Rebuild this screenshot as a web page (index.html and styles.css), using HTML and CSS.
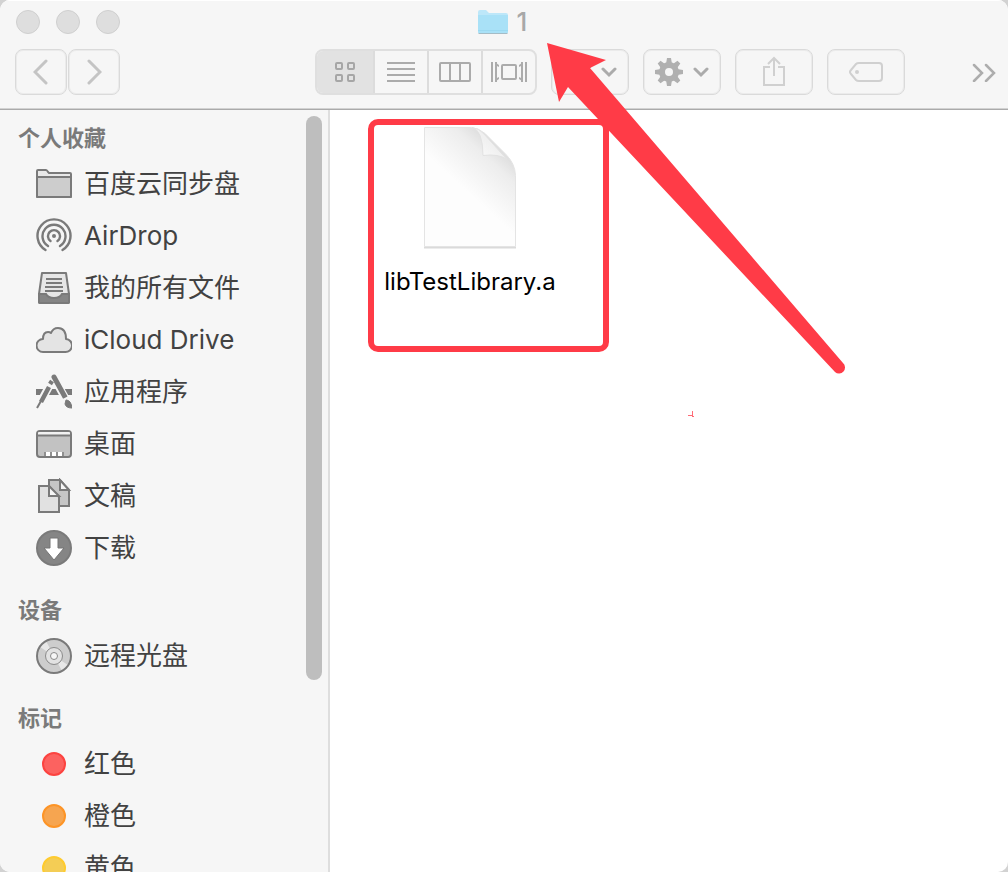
FILE: index.html
```html
<!DOCTYPE html>
<html lang="zh-CN">
<head>
    <meta charset="UTF-8">
    <meta name="viewport" content="width=device-width, initial-scale=1.0">
    <title>1</title>
    <link rel="stylesheet" href="styles.css">
</head>
<body>
    <div class="window">
        <header class="titlebar">
            <div class="title-row">
                <div class="lights">
                    <button class="light" aria-label="关闭"></button>
                    <button class="light" aria-label="最小化"></button>
                    <button class="light" aria-label="缩放"></button>
                </div>
                <h1 class="title">
                    <svg width="32" height="26" viewBox="0 0 32 26">
                        <path d="M1 3q0-2 2-2h6l3 3h17q2 0 2 2v17q0 1-1 1H2q-1 0-1-1z" fill="#bde7f9"/>
                        <path d="M1 6h30v17q0 1-1 1H2q-1 0-1-1z" fill="#a9e1f7"/>
                        <path d="M1 21.500h30" stroke="#9cdaf1"/>
                        <path d="M1.500 24.500h29" stroke="#a5bcc6"/>
                    </svg>
                    <span>1</span>
                </h1>
            </div>
            <div class="toolbar">
                <div class="nav">
                    <button class="tool nav-button" aria-label="后退">
                        <svg width="16" height="26" viewBox="0 0 16 26"><path d="M13 2L2 13l11 11" fill="none" stroke="#c4c4c4" stroke-width="3" stroke-linecap="round"/></svg>
                    </button>
                    <button class="tool nav-button" aria-label="前进">
                        <svg width="16" height="26" viewBox="0 0 16 26"><path d="M3 2l11 11L3 24" fill="none" stroke="#c4c4c4" stroke-width="3" stroke-linecap="round"/></svg>
                    </button>
                </div>
                <div class="views">
                    <button class="view active" aria-label="图标">
                        <svg width="22" height="22" viewBox="0 0 22 22" fill="none" stroke="#a6a6a6" stroke-width="2"><rect x="2" y="2" width="6" height="6" rx="1"/><rect x="14" y="2" width="6" height="6" rx="1"/><rect x="2" y="14" width="6" height="6" rx="1"/><rect x="14" y="14" width="6" height="6" rx="1"/></svg>
                    </button>
                    <button class="view" aria-label="列表">
                        <svg width="28" height="20" viewBox="0 0 28 20"><path d="M0 1h28M0 7h28M0 13h28M0 19h28" stroke="#ababab" stroke-width="2"/></svg>
                    </button>
                    <button class="view" aria-label="分栏">
                        <svg width="32" height="20" viewBox="0 0 32 20" fill="none" stroke="#ababab" stroke-width="2"><rect x="1" y="1" width="30" height="18" rx="1"/><path d="M11 1v18M21 1v18"/></svg>
                    </button>
                    <button class="view" aria-label="Cover Flow">
                        <svg width="36" height="20" viewBox="0 0 36 20" fill="none" stroke="#ababab" stroke-width="2"><rect x="11" y="3" width="14" height="14" rx="1"/><path d="M1 0v20M5 0v20M31 0v20M35 0v20"/><path d="M5 1l3 2v2L6 4zM5 19l3-2v-2l-2 1zM31 1l-3 2v2l2-1zM31 19l-3-2v-2l2 1z" fill="#ababab" stroke="none"/></svg>
                    </button>
                </div>
                <button class="tool" aria-label="排列">
                    <svg width="28" height="28" viewBox="0 0 28 28" fill="none" stroke="#ababab" stroke-width="2"><path d="M3 4h6v5H3zM12 4h6v5h-6zM21 4h6v5h-6zM3 18h6v5H3zM12 18h6v5h-6z"/></svg>
                    <svg width="16" height="12" viewBox="0 0 16 12"><path d="M2 3l6 6 6-6" fill="none" stroke="#ababab" stroke-width="3" stroke-linecap="round"/></svg>
                </button>
                <button class="tool" aria-label="操作">
                    <svg width="28" height="28" viewBox="-14 -14 28 28" fill="#b0b0b0">
                        <path d="M-2-14h4l1 6h-6zM-2 14h4l1-6h-6zM-14-2v4l6 1v-6zM14-2v4l-6 1v-6z"/>
                        <path d="M-2-14h4l1 6h-6zM-2 14h4l1-6h-6zM-14-2v4l6 1v-6zM14-2v4l-6 1v-6z" transform="rotate(45)"/>
                        <circle r="7" fill="none" stroke="#b0b0b0" stroke-width="6"/>
                    </svg>
                    <svg width="16" height="12" viewBox="0 0 16 12"><path d="M2 3l6 6 6-6" fill="none" stroke="#ababab" stroke-width="3" stroke-linecap="round"/></svg>
                </button>
                <button class="tool" aria-label="共享">
                    <svg width="24" height="32" viewBox="0 0 24 32" fill="none" stroke="#d0d0d0" stroke-width="2"><path d="M8 11H2v18h20V11h-6M12 20V2M6 8l6-6 6 6"/></svg>
                </button>
                <button class="tool" aria-label="标记">
                    <svg width="34" height="20" viewBox="0 0 34 20"><path d="M10 1h20q3 0 3 3v12q0 3-3 3H10q-2 0-3-1l-5-6q-2-2 0-4l5-6q1-1 3-1z" fill="none" stroke="#d0d0d0" stroke-width="2"/><circle cx="8" cy="10" r="2" fill="#d0d0d0"/></svg>
                </button>
                <button class="more" aria-label="更多">
                    <svg width="24" height="20" viewBox="0 0 24 20"><path d="M2 3l8 8-8 8M14 3l8 8-8 8" fill="none" stroke="#adadad" stroke-width="2.500" stroke-linecap="round"/></svg>
                </button>
            </div>
        </header>

        <div class="content">
            <nav class="sidebar">
                <h2 class="section-title">个人收藏</h2>
                <ul class="places">
                    <li><a href="#" class="place">
                        <svg class="icon" viewBox="0 0 36 36" stroke="#7a7a7a" stroke-width="2"><path d="M1 30V5q0-1 1-1h8q1 0 2 2l1 1h21q1 0 1 1v22q0 1-1 1H2q-1 0-1-1z" fill="#e8e8e8"/><path d="M1 11h34v20H1z" fill="#cdcdcd" stroke-linejoin="round"/></svg>
                        百度云同步盘</a></li>
                    <li><a href="#" class="place">
                        <svg class="icon" viewBox="0 0 36 36" fill="none" stroke="#7a7a7a" stroke-width="2.400" stroke-linecap="round"><circle cx="18" cy="18" r="2" fill="#7a7a7a" stroke="none"/><path d="M14.500 23A6 6 0 1 1 21.500 23M12 28A11.500 11.500 0 1 1 24 28M9.500 32A16.500 16.500 0 1 1 26.500 32"/></svg>
                        AirDrop</a></li>
                    <li><a href="#" class="place">
                        <svg class="icon" viewBox="0 0 36 36" stroke="#7a7a7a" stroke-width="2"><path d="M6 3h24l3 21v8q0 1-1 1H4q-1 0-1-1v-8z" fill="#e6e6e6" stroke-linejoin="round"/><path d="M3 24h7q2 4 8 4t8-4h7v8q0 1-1 1H4q-1 0-1-1z" fill="#858585"/><path d="M10 9h16M10 13h16M9 17h18M9 21h18"/></svg>
                        我的所有文件</a></li>
                    <li><a href="#" class="place">
                        <svg class="icon" viewBox="0 0 36 36"><path d="M7 30a6.500 6.500 0 0 1 0-13Q7 10 12 10q2 0 3 1 2-5 7-5 8 0 8 11a6.500 6.500 0 0 1-1 13z" fill="#e4e4e4" stroke="#7a7a7a" stroke-width="2" stroke-linejoin="round"/></svg>
                        iCloud Drive</a></li>
                    <li><a href="#" class="place">
                        <svg class="icon" viewBox="0 0 36 36" fill="none" stroke="#7a7a7a"><path d="M0 18h36" stroke-width="6"/><path d="M17 5L3 31M18 4l14 25" stroke="#f6f6f6" stroke-width="8"/><path d="M16 7l-2 3M13 13L5 28" stroke-width="4.500"/><path d="M5 27l-4 7" stroke-width="2"/><path d="M18 3l11 20" stroke-width="5" stroke-linecap="round"/><path d="M27 26l6-3" stroke="#f6f6f6" stroke-width="2"/><path d="M30 26q5 0 6 8-6 0-7-4z" fill="#7a7a7a"/></svg>
                        应用程序</a></li>
                    <li><a href="#" class="place">
                        <svg class="icon" viewBox="0 0 36 36"><rect x="1" y="5" width="34" height="26" rx="3" fill="#c2c2c2" stroke="#7a7a7a" stroke-width="2"/><path d="M2 7q0-1 1-1h30q1 0 1 1v2H2z" fill="#f2f2f2"/><path d="M2 9.500h32" stroke="#7a7a7a" stroke-width="2"/><path d="M8 26h20v4H8z" fill="#8f8f8f"/><path d="M10 26h4v4h-4zM16 26h4v4h-4zM22 26h4v4h-4z" fill="#fff"/></svg>
                        桌面</a></li>
                    <li><a href="#" class="place">
                        <svg class="icon" viewBox="0 0 36 36" stroke="#7a7a7a" stroke-width="2"><path d="M13 2h11l9 10v16H13z" fill="#c6c6c6"/><path d="M24 2v10h9z" fill="#f6f6f6"/><path d="M3 8h10l10 11v15H3z" fill="#e1e1e1"/><path d="M13 8v10h10z" fill="#f6f6f6"/></svg>
                        文稿</a></li>
                    <li><a href="#" class="place">
                        <svg class="icon" viewBox="0 0 36 36"><circle cx="18" cy="18" r="17" fill="#858585" stroke="#7a7a7a" stroke-width="2"/><path d="M14 8h8v10h6L18 30 8 18h6z" fill="#fff" stroke="#747474"/></svg>
                        下载</a></li>
                </ul>
                <h2 class="section-title">设备</h2>
                <ul class="places">
                    <li><a href="#" class="place">
                        <svg class="icon" viewBox="0 0 36 36"><circle cx="18" cy="18" r="17" fill="#cdcdcd"/><path d="M18 18L4 9l6-6zM18 18l14 9-6 6z" fill="#e8e8e8"/><circle cx="18" cy="18" r="17" fill="none" stroke="#7a7a7a" stroke-width="2"/><circle cx="18" cy="18" r="8.500" fill="#e2e2e2" stroke="#8a8a8a"/><circle cx="18" cy="18" r="3.500" fill="#f6f6f6" stroke="#8a8a8a"/></svg>
                        远程光盘</a></li>
                </ul>
                <h2 class="section-title">标记</h2>
                <ul class="places">
                    <li><a href="#" class="place"><span class="icon"><span class="tag red"></span></span>红色</a></li>
                    <li><a href="#" class="place"><span class="icon"><span class="tag orange"></span></span>橙色</a></li>
                    <li><a href="#" class="place"><span class="icon"><span class="tag yellow"></span></span>黄色</a></li>
                </ul>
                <div class="scroll-thumb"></div>
            </nav>

            <main class="files">
                <div class="highlight">
                    <button class="file">
                        <svg width="100" height="128" viewBox="0 0 100 128">
                            <defs>
                                <linearGradient id="paper" gradientUnits="userSpaceOnUse" x1="82" y1="18" x2="42" y2="62">
                                    <stop offset="0" stop-color="#d8d8d8"/>
                                    <stop offset="0.350" stop-color="#ededed"/>
                                    <stop offset="1" stop-color="#fdfdfd"/>
                                </linearGradient>
                                <linearGradient id="curl" x1="0" y1="1" x2="0.500" y2="0.500">
                                    <stop offset="0" stop-color="#fff"/>
                                    <stop offset="1" stop-color="#f0f0f0"/>
                                </linearGradient>
                            </defs>
                            <path d="M4 122.500h92" stroke="#dadada" stroke-width="2"/>
                            <path d="M4.500 2.500H50q8 0 15 6l21 21q9 9 9.500 21v71h-91z" fill="url(#paper)" stroke="#e4e4e4"/>
                            <path d="M52 2.500q11 3 11 28 16-2 24 4L64 9q-5-6-12-6.500z" fill="url(#curl)" stroke="#e2e2e2"/>
                        </svg>
                        <span>libTestLibrary.a</span>
                    </button>
                </div>
            </main>
        </div>

        <!-- hand drawn marks on top of the window -->
        <svg class="arrow" width="300" height="332" viewBox="0 0 300 332"><path d="M0 0l59 17-16 8 253 295a6 6 0 0 1-8 9L21 44l-9 15z" fill="#ff3b47"/></svg>
        <svg class="speck" width="8" height="8" viewBox="0 0 8 8"><path d="M0 5.500h4M4.500 1v5M4 6.500h2" fill="none" stroke="#ff6b76"/></svg>
    </div>
</body>
</html>
```
FILE: styles.css
```css
* {
    box-sizing: border-box;
}
body {
    margin: 0;
    background-color: #d2d2d2;
    color: #424242;
    font-family: Inter, "Noto Sans CJK SC", sans-serif;
}
button {
    font: inherit;
    padding: 0;
    border: none;
    background: none;
}
h1, h2, ul {
    margin: 0;
    padding: 0;
}
svg {
    display: block;
    flex: none;
}
.window {
    position: relative;
    display: flex;
    flex-direction: column;
    height: 100vh;
    overflow: hidden;
    border-radius: 10px;
    background-color: #fff;
}

/* title bar */
.titlebar {
    flex: none;
    height: 110px;
    border-top: 1px solid #fff;
    border-bottom: 1px solid #aaa;
    background-color: #f6f6f6;
    box-shadow: inset 0 -1px #d2d2d2;
}
.title-row {
    display: grid;
    grid-template-columns: 1fr auto 1fr;
    align-items: center;
    height: 42px;
    padding: 0 20px 0 16px;
}
.lights {
    display: flex;
    gap: 16px;
}
.light {
    width: 24px;
    height: 24px;
    border: 1px solid #cfcfcf;
    border-radius: 50%;
    background-color: #dedede;
}
.title {
    display: flex;
    align-items: center;
    gap: 8px;
    color: #a8a8a8;
    font-size: 26px;
    font-weight: 500;
    line-height: 32px;
}
.toolbar {
    display: flex;
    align-items: center;
    gap: 14px;
    margin-top: 6px;
    padding: 0 12px 0 15px;
}
.nav {
    display: flex;
    gap: 1px;
    margin-right: 181px;
}
.tool {
    display: flex;
    align-items: center;
    justify-content: center;
    gap: 10px;
    width: 78px;
    height: 46px;
    border: 1px solid #dadada;
    border-radius: 8px;
    box-shadow: inset 0 0 0 1px #ebebeb;
}
.nav-button {
    width: 52px;
}
.views {
    display: flex;
    height: 46px;
    border: 2px solid #dfdfdf;
    border-radius: 8px;
    overflow: hidden;
}
.view {
    display: flex;
    align-items: center;
    justify-content: center;
    width: 54px;
    border-left: 2px solid #dcdcdc;
}
.view.active {
    width: 56px;
    border-left: none;
    background-color: #e2e2e2;
}
.more {
    margin-left: auto;
}

/* sidebar */
.content {
    display: flex;
    flex: 1;
    min-height: 0;
}
.sidebar {
    position: relative;
    flex: none;
    width: 330px;
    overflow: hidden;
    border-right: 2px solid #dedede;
    background-color: #f6f6f6;
}
.section-title {
    margin-top: 16px;
    padding-left: 18px;
    color: #7a7a7a;
    font-size: 22px;
    font-weight: 700;
    line-height: 40px;
}
.section-title:first-child {
    margin-top: 8px;
}
.places {
    list-style: none;
}
.place {
    display: flex;
    align-items: center;
    gap: 12px;
    height: 52px;
    padding-left: 36px;
    color: inherit;
    font-size: 26px;
    line-height: 32px;
    text-decoration: none;
}
.icon {
    display: flex;
    align-items: center;
    justify-content: center;
    width: 36px;
    height: 36px;
}
.tag {
    width: 24px;
    height: 24px;
    border: 2px solid;
    border-radius: 50%;
}
.red {
    border-color: #fc4340;
    background-color: #fc6260;
}
.orange {
    border-color: #fd9426;
    background-color: #f6a550;
}
.yellow {
    border-color: #fecb2f;
    background-color: #f4cd55;
}
.scroll-thumb {
    position: absolute;
    top: 6px;
    right: 6px;
    width: 16px;
    height: 74%;
    border-radius: 8px;
    background-color: #bebebe;
}

/* file area */
.files {
    flex: 1;
    padding: 9px 38px;
}
.highlight {
    width: 241px;
    height: 233px;
    border: 6px solid #ff3b47;
    border-radius: 10px;
}
.file {
    display: flex;
    flex-direction: column;
    align-items: center;
    gap: 13px;
    width: 192px;
    color: #000;
    font-size: 24px;
    line-height: 32px;
}
.arrow {
    position: absolute;
    top: 43px;
    left: 547px;
}
.speck {
    position: absolute;
    top: 410px;
    left: 688px;
}
```
